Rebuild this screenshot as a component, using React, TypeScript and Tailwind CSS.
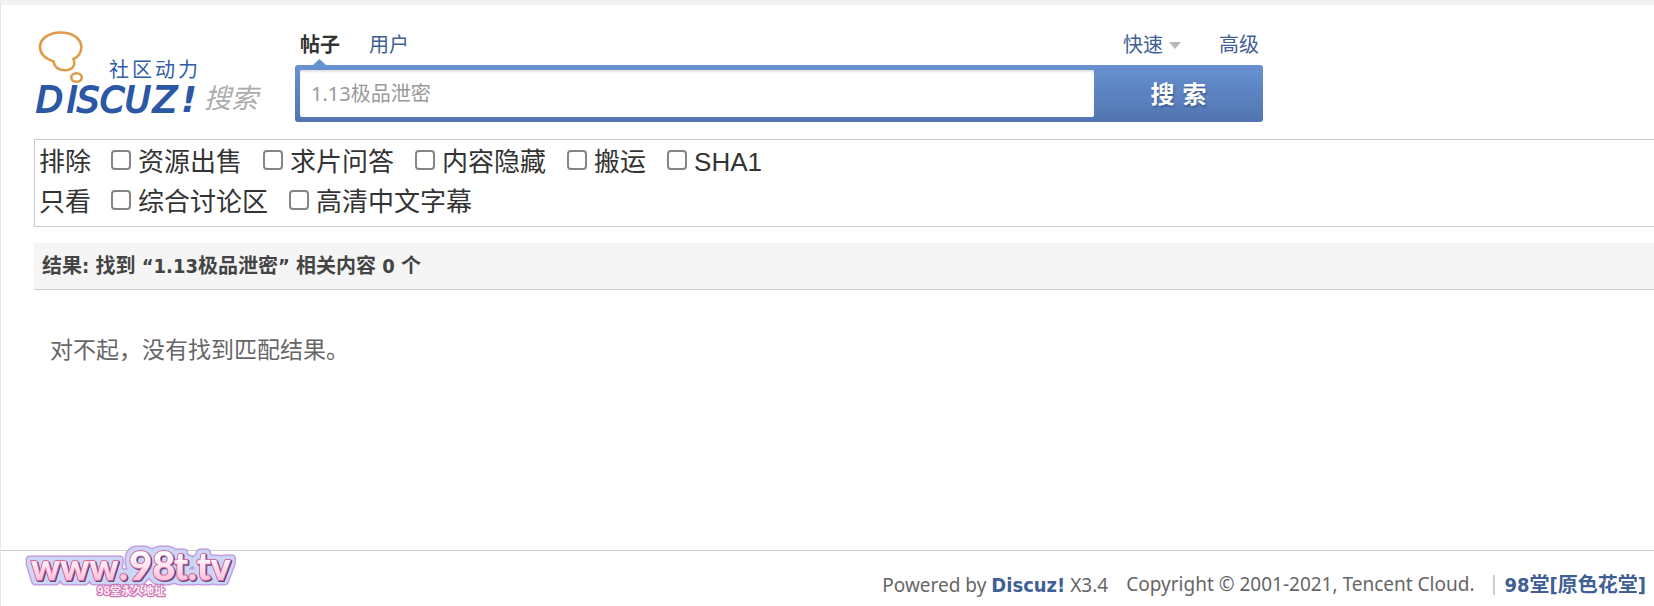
import { useState } from "react";

const excludeOptions = ["资源出售", "求片问答", "内容隐藏", "搬运", "SHA1"];
const onlyOptions = ["综合讨论区", "高清中文字幕"];

function Logo() {
  return (
    <svg width="236" height="96" viewBox="28 24 236 96" role="img" aria-label="社区动力 Discuz! 搜索">
      <g fill="none" stroke="#dd9c4a" strokeWidth="2.6">
        <path d="M53.500 61.500 C45 58.500 40 54 40 47 C40 38.500 49 32.500 60.500 32.500 C72.500 32.500 81.300 38.500 81.300 47 C81.300 52.500 79 56.500 73.500 59 C76 65.500 72 70.300 65.500 70.300 C59 70.300 54.500 67.500 53.500 61.500 Z" />
        <ellipse cx="76.500" cy="77.500" rx="5.300" ry="4.300" />
      </g>
      <text x="109" y="77" fill="#2f5ca8" fontSize="20" letterSpacing="3" className="font-['Noto_Sans_CJK_SC',sans-serif]">社区动力</text>
      <text y="112" fill="#2b57a5" stroke="#2b57a5" strokeWidth="1.8" fontSize="35" fontStyle="italic" className="font-['DejaVu_Sans',sans-serif]">
        <tspan x="36 67 77 100 125 153">DISCUZ</tspan>
        <tspan x="181" fontWeight="700" strokeWidth="0">!</tspan>
      </text>
      <text x="204" y="108" fill="#acacac" fontSize="27" fontStyle="italic" className="font-['Noto_Sans_CJK_SC',sans-serif]">搜索</text>
    </svg>
  );
}

function SiteMark() {
  return (
    <svg width="232" height="66" viewBox="14 538 232 66" role="img" aria-label="www.98t.tv 98堂永久地址">
      <defs>
        <linearGradient id="pink" x1="0" y1="0" x2="0" y2="1">
          <stop offset="0.3" stopColor="#ffffff" />
          <stop offset="0.8" stopColor="#ffc3dc" />
        </linearGradient>
        {/* rounded outer rings: blur the letter shapes, then cut at a threshold */}
        <filter id="rings" filterUnits="userSpaceOnUse" x="14" y="538" width="232" height="66" colorInterpolationFilters="sRGB">
          <feMorphology in="SourceAlpha" operator="dilate" radius="3" result="wide" />
          <feGaussianBlur in="wide" stdDeviation="1.6" result="soft" />
          <feComponentTransfer in="soft" result="outer">
            <feFuncA type="linear" slope="6" intercept="-0.3" />
          </feComponentTransfer>
          <feComponentTransfer in="soft" result="inner">
            <feFuncA type="linear" slope="6" intercept="-2" />
          </feComponentTransfer>
          <feFlood floodColor="#c39adb" />
          <feComposite in2="outer" operator="in" result="purple" />
          <feFlood floodColor="#cbd6f7" />
          <feComposite in2="inner" operator="in" result="blue" />
          <feOffset in="SourceAlpha" dx="1" dy="1" result="shift" />
          <feFlood floodColor="#5a4580" />
          <feComposite in2="shift" operator="in" result="dark" />
          <feMerge>
            <feMergeNode in="purple" />
            <feMergeNode in="blue" />
            <feMergeNode in="dark" />
            <feMergeNode in="SourceGraphic" />
          </feMerge>
        </filter>
      </defs>
      <text
        y="580"
        fontSize="37"
        fontWeight="900"
        fill="url(#pink)"
        stroke="#d9679c"
        strokeWidth="2"
        strokeLinejoin="round"
        paintOrder="stroke"
        filter="url(#rings)"
        className="font-['Lato',sans-serif]"
      >
        <tspan x="31" fontSize="36">www</tspan>
        <tspan x="119">.</tspan>
        <tspan x="129" fontSize="40">98</tspan>
        <tspan x="174">t.tv</tspan>
      </text>
      <text
        x="97"
        y="595"
        fontSize="11"
        fontWeight="700"
        fill="#fff0f7"
        stroke="#cf77b4"
        strokeWidth="2.4"
        strokeLinejoin="round"
        paintOrder="stroke"
        className="font-['Noto_Sans_CJK_SC',sans-serif]"
      >
        98堂永久地址
      </text>
    </svg>
  );
}

function FilterRow({ title, options }: { title: string; options: string[] }) {
  return (
    <div className="flex h-10 items-center gap-5">
      <span className="pt-1">{title}</span>
      {options.map((name) => (
        <label key={name} className="mr-px flex items-center gap-[7px]">
          <input
            type="checkbox"
            className="size-5 appearance-none rounded-[4px] border-2 border-[#858585] bg-white checked:bg-[#0075ff]"
          />
          <span className="pt-1">{name}</span>
        </label>
      ))}
    </div>
  );
}

export default function App() {
  const [query, setQuery] = useState("1.13极品泄密");

  return (
    <div className="flex min-h-screen flex-col border-l border-t-5 border-l-[#e6e6e6] border-t-[#f2f2f2] bg-white font-['Noto_Sans','Noto_Sans_CJK_SC',sans-serif] text-[20px] text-[#333]">
      <header className="flex h-[117px] gap-[31px] pl-[27px]">
        <div className="shrink-0 pt-[19px]">
          <Logo />
        </div>
        <form className="w-full max-w-[968px] pt-6" onSubmit={(e) => e.preventDefault()}>
          <nav className="flex h-9 pr-1 pl-[5px] leading-8 text-[#3f5f95]">
            <a href="#posts" className="relative font-bold text-[#333]">
              帖子
              <svg className="absolute top-[30px] left-[13px]" width="13" height="6" viewBox="0 0 13 6" aria-hidden="true">
                <path d="M0 6 L6.500 0 L13 6 Z" fill="#6690cf" />
              </svg>
            </a>
            <a href="#users" className="ml-[29px]">用户</a>
            <a href="#quick" className="ml-auto flex items-center gap-[6px] self-start">
              快速
              <svg width="12" height="7" viewBox="0 0 12 7" aria-hidden="true">
                <path d="M0 0 H12 L6 7 Z" fill="#b8b8b8" />
              </svg>
            </a>
            <a href="#advanced" className="ml-[38px]">高级</a>
          </nav>
          <div className="flex h-[57px] rounded-[3px] bg-linear-to-b from-[#6791d1] to-[#5275b0] p-[5px] pr-0">
            <input
              aria-label="搜索内容"
              value={query}
              onChange={(e) => setQuery(e.target.value)}
              className="min-w-0 flex-1 rounded-[2px] bg-white px-[11px] text-[#999] shadow-[inset_0_2px_2px_#e4e4e4] outline-none"
            />
            <button type="submit" className="flex w-[169px] items-center justify-center gap-2 text-[24px] font-bold text-white [text-shadow:1px_2px_2px_#3d5c94]">
              <span>搜</span>
              <span>索</span>
            </button>
          </div>
        </form>
      </header>

      <main className="ml-[33px] flex-1">
        <section className="mt-[17px] border border-r-0 border-[#ccc] pb-[6px] pl-1 font-['Liberation_Sans','Noto_Sans_CJK_SC',sans-serif] text-[26px]">
          <FilterRow title="排除" options={excludeOptions} />
          <FilterRow title="只看" options={onlyOptions} />
        </section>
        <h2 className="mt-4 flex h-[47px] items-center border-b border-[#ccc] bg-[#f5f5f5] pl-2 font-['DejaVu_Sans_Condensed','Noto_Sans_CJK_SC',sans-serif] font-bold text-[#444]">
          结果: 找到 “1.13极品泄密” 相关内容 0 个
        </h2>
        <p className="mt-[43px] pl-4 text-[23px] leading-8 text-[#666]">对不起，没有找到匹配结果。</p>
      </main>

      <footer className="relative flex h-14 items-center justify-end border-t border-[#ccc] pt-3 pr-2 text-[19px] text-[#666]">
        <div className="absolute -top-[13px] left-[13px]">
          <SiteMark />
        </div>
        <span>
          Powered by{" "}
          <a href="#discuz" className="font-['DejaVu_Sans_Condensed',sans-serif] text-[20px] font-bold text-[#3f5f95]">Discuz!</a> X3.4
        </span>
        <span className="ml-[18px]">Copyright © 2001-2021, Tencent Cloud.</span>
        <span className="mr-[10px] ml-[18px] h-5 w-[2px] bg-[#ccc]" />
        <a href="#home" className="font-['DejaVu_Sans_Condensed','Noto_Sans_CJK_SC',sans-serif] text-[20px] font-bold text-[#3f5f95]">98堂[原色花堂]</a>
      </footer>
    </div>
  );
}
